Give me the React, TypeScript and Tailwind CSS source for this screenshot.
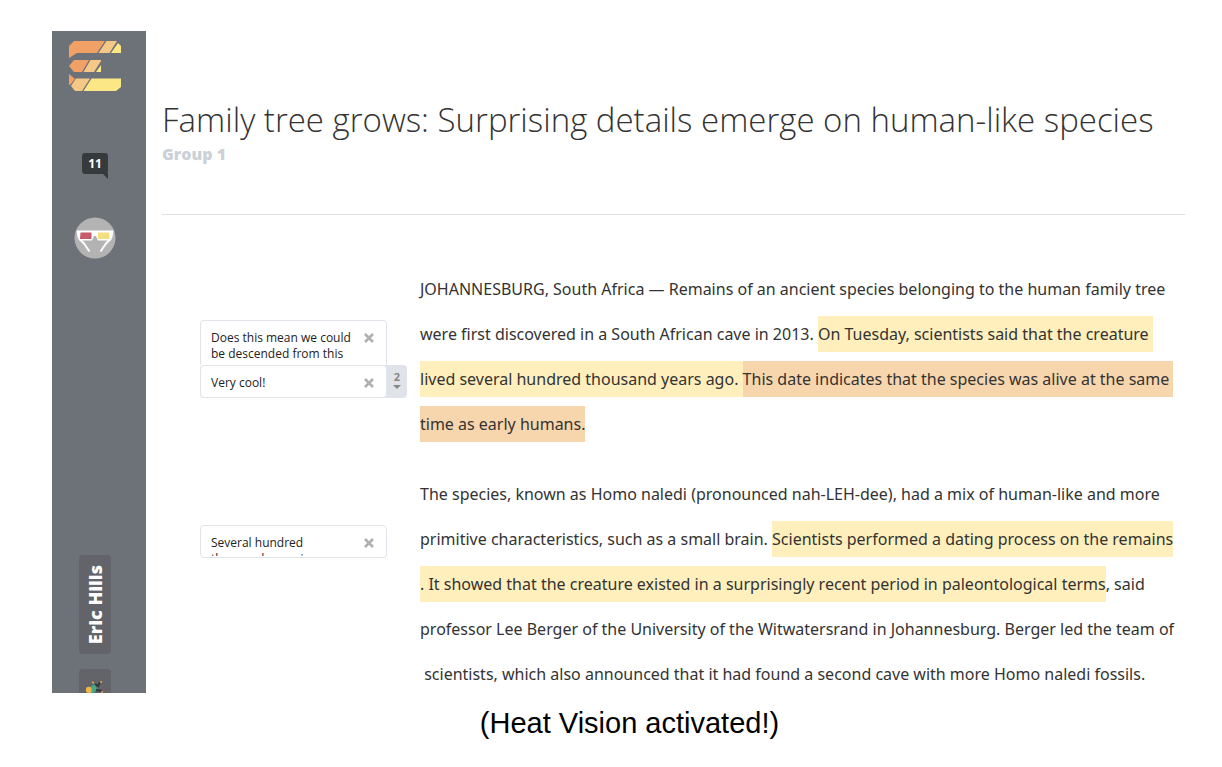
import React from "react";

const NOTE_BASE =
  "flex items-start justify-between overflow-hidden rounded border border-[#e1e4ea] bg-white pl-[10px] pr-3 pt-[9px] text-xs leading-4 text-[#222]";

function Logo() {
  return (
    <svg width="52" height="50" viewBox="0 0 52 50" aria-label="Home" role="img">
      <path d="M5 0H36L28 12H8L0 17V5Z" fill="#f1a066" />
      <path d="M37.500 0H48L40.500 12H29.500Z" fill="#f6c887" />
      <path d="M49 2L52 5V12H42Z" fill="#fce787" />
      <path d="M5 19H20L13 31H5L0 25Z" fill="#f1a066" />
      <path d="M21.500 19H32V20L25 31H14.500Z" fill="#f6c887" />
      <path d="M32 24V31H27Z" fill="#fce787" />
      <path d="M0 33L6 38L1 44H0Z" fill="#f1a066" />
      <path d="M7 37.500H21L13 50H6L2 45Z" fill="#f6c887" />
      <path d="M22.500 37.500H52V46L47 50H14.500Z" fill="#fce787" />
    </svg>
  );
}

function HeatGlasses() {
  return (
    <svg width="42" height="42" viewBox="0 0 42 42" aria-hidden="true">
      <circle cx="21" cy="21" r="20.500" fill="#b3b3b3" />
      <path
        d="M2.500 13.500H39.500L38.500 20L36.500 23.500H24L22 19H20L18 23.500H5.500L3.500 20Z"
        fill="#fff"
      />
      <path
        d="M5 21.500L10 26.500L15.500 34.500M37 21.500L32 26.500L26.500 34.500"
        stroke="#fff"
        strokeWidth="2"
        fill="none"
        strokeLinejoin="round"
      />
      <path d="M6.500 15.500H17.500V22H6Z" fill="#c65b6b" />
      <path d="M24 15.500H35L35.500 22H24Z" fill="#f3df82" />
    </svg>
  );
}

function Avatar() {
  return (
    <svg width="20" height="12" viewBox="0 0 20 12" aria-hidden="true">
      <circle cx="4" cy="9" r="3.200" fill="#f2b643" />
      <path d="M6 5L10 3L12 8L9 12H7Z" fill="#45a886" />
      <path d="M10 3L13 5L15 1M11 9L17 10" stroke="#33373b" strokeWidth="2" fill="none" />
      <path d="M7 1L9 2M16 0V2M17 10V12" stroke="#e9a34a" strokeWidth="1.500" />
    </svg>
  );
}

function DismissButton() {
  return (
    <button type="button" aria-label="Dismiss note" className="mt-[3px] shrink-0">
      <svg width="10" height="10" viewBox="0 0 10 10">
        <path d="M1 1L9 9M9 1L1 9" stroke="#b0b0b0" strokeWidth="2.600" />
      </svg>
    </button>
  );
}

function Warm({ children }: { children: React.ReactNode }) {
  return <mark className="bg-[#feefbc] py-[7px] text-inherit">{children}</mark>;
}

function Hot({ children }: { children: React.ReactNode }) {
  return <mark className="bg-[#f8d6ad] py-[7px] text-inherit">{children}</mark>;
}

function Sidebar() {
  return (
    <nav className="flex w-[94px] shrink-0 flex-col items-center bg-[#6d7279] pt-[10px]">
      <a href="#home" className="-ml-2">
        <Logo />
      </a>
      <button
        type="button"
        aria-label="11 comments"
        className="relative mt-[62px] -ml-2 h-[21px] w-[26px] rounded-[3px] bg-[#363a3d] text-xs font-bold text-white"
      >
        11
        <svg className="absolute right-0 top-5" width="6" height="6" viewBox="0 0 6 6">
          <path d="M0 0H6V6Z" fill="#363a3d" />
        </svg>
      </button>
      <button type="button" aria-label="Heat Vision" className="mt-[43px] -ml-2">
        <HeatGlasses />
      </button>
      <button
        type="button"
        className="mt-auto -ml-2 flex h-[99px] w-8 items-center justify-center rounded bg-[#626469] text-lg font-extrabold text-white"
      >
        <span className="rotate-180 [writing-mode:vertical-rl]">Eric Hills</span>
      </button>
      <button
        type="button"
        aria-label="Profile"
        className="mt-[15px] -ml-2 flex h-6 w-8 items-end justify-center rounded-t bg-[#626469]"
      >
        <Avatar />
      </button>
    </nav>
  );
}

function Notes() {
  return (
    <aside className="ml-[38px] mt-[53px] w-[207px] shrink-0">
      <div className={`${NOTE_BASE} h-[45px] w-[187px] rounded-b-none border-b-0`}>
        <p>
          Does this mean we could
          <br />
          be descended from this
        </p>
        <DismissButton />
      </div>
      <div className="flex rounded bg-[#e0e3e9]">
        <div className={`${NOTE_BASE} h-[33px] w-[187px]`}>
          <p>Very cool!</p>
          <DismissButton />
        </div>
        <button
          type="button"
          aria-label="Show 2 notes"
          className="flex flex-1 flex-col items-center pt-1 text-[11px] leading-4 font-bold text-[#888]"
        >
          2
          <svg width="8" height="4" viewBox="0 0 8 4">
            <path d="M0 0H8L4 4Z" fill="#888" />
          </svg>
        </button>
      </div>
      <div className={`${NOTE_BASE} mt-[127px] h-[33px] w-[187px]`}>
        <p className="h-[21px] overflow-hidden">
          Several hundred
          <br />
          thousand years is
        </p>
        <DismissButton />
      </div>
    </aside>
  );
}

export default function App() {
  return (
    <div className="bg-white pt-[31px] pr-[37px] pl-[52px] font-['Open_Sans',sans-serif]">
      <div className="flex">
        <Sidebar />
        <main className="min-w-0 flex-1 pl-4">
          <header className="border-b border-[#dfdfdf] pt-[64px] pb-[51px]">
            <h1 className="text-[33px] leading-[50px] font-light whitespace-nowrap text-[#333]">
              Family tree grows: Surprising details emerge on human-like species
            </h1>
            <p className="text-base leading-[18px] font-extrabold text-[#cbd1d7]">Group 1</p>
          </header>
          <div className="flex pt-[52px]">
            <Notes />
            <article className="-mb-1 ml-[13px] min-w-0 space-y-[25px] font-['Noto_Sans',sans-serif] text-base leading-[45px] whitespace-nowrap text-[#333]">
              <p>
                JOHANNESBURG, South Africa — Remains of an ancient species belonging to the human family tree
                <br />
                were first discovered in a South African cave in 2013.{" "}
                <Warm>
                  On Tuesday, scientists said that the creature&nbsp;
                  <br />
                  lived several hundred thousand years ago.{" "}
                </Warm>
                <Hot>
                  This date indicates that the species was alive at the same&nbsp;
                  <br />
                  time as early humans.
                </Hot>
              </p>
              <p>
                The species, known as Homo naledi (pronounced nah-LEH-dee), had a mix of human-like and more
                <br />
                primitive characteristics, such as a small brain.{" "}
                <Warm>
                  Scientists performed a dating process on the remains
                  <br />
                  . It showed that the creature existed in a surprisingly recent period in paleontological terms
                </Warm>
                , said
                <br />
                professor Lee Berger of the University of the Witwatersrand in Johannesburg. Berger led the team of
                <br />
                &nbsp;scientists, which also announced that it had found a second cave with more Homo naledi fossils.
              </p>
            </article>
          </div>
        </main>
      </div>
      <p className="mt-3 pl-[22px] text-center font-['Liberation_Sans',sans-serif] text-[29px] leading-9 text-black">
        (Heat Vision activated!)
      </p>
    </div>
  );
}
